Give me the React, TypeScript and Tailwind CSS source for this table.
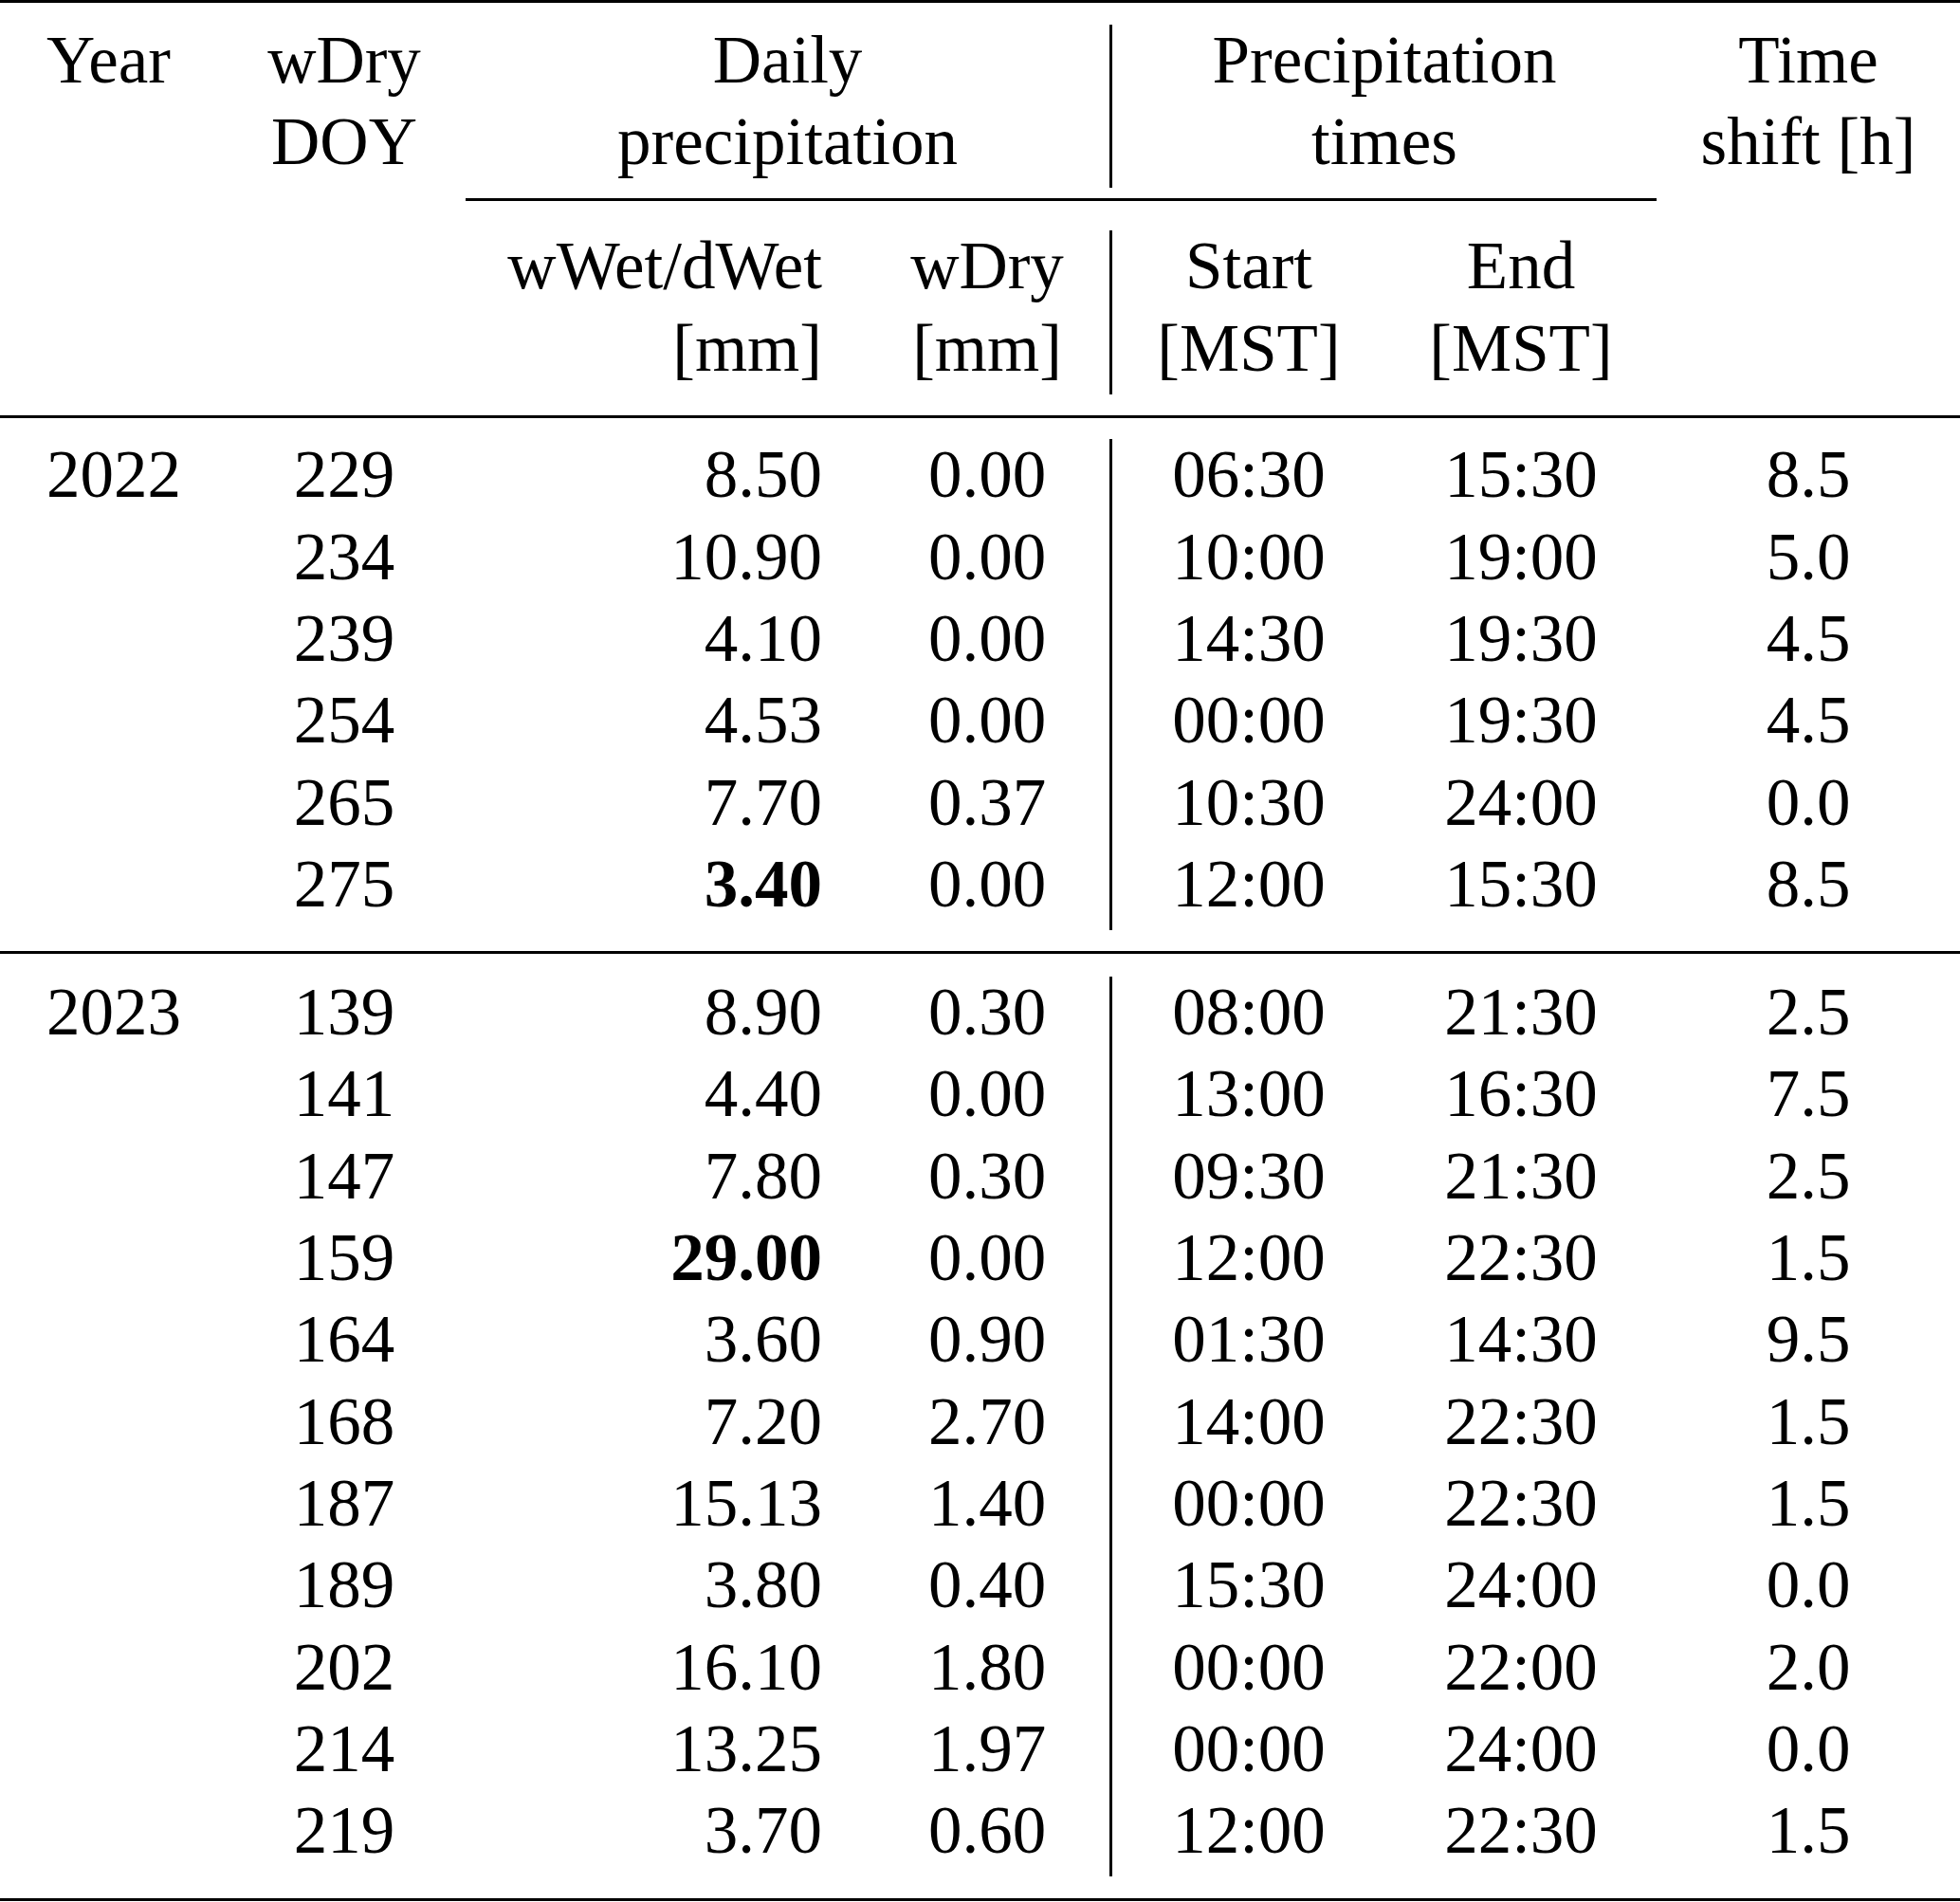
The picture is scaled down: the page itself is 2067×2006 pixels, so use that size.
import React from "react";

type Row = [string, string, string, string, string, string, boolean];

const rows2022: Row[] = [
  ["229", "8.50", "0.00", "06:30", "15:30", "8.5", false],
  ["234", "10.90", "0.00", "10:00", "19:00", "5.0", false],
  ["239", "4.10", "0.00", "14:30", "19:30", "4.5", false],
  ["254", "4.53", "0.00", "00:00", "19:30", "4.5", false],
  ["265", "7.70", "0.37", "10:30", "24:00", "0.0", false],
  ["275", "3.40", "0.00", "12:00", "15:30", "8.5", true],
];

const rows2023: Row[] = [
  ["139", "8.90", "0.30", "08:00", "21:30", "2.5", false],
  ["141", "4.40", "0.00", "13:00", "16:30", "7.5", false],
  ["147", "7.80", "0.30", "09:30", "21:30", "2.5", false],
  ["159", "29.00", "0.00", "12:00", "22:30", "1.5", true],
  ["164", "3.60", "0.90", "01:30", "14:30", "9.5", false],
  ["168", "7.20", "2.70", "14:00", "22:30", "1.5", false],
  ["187", "15.13", "1.40", "00:00", "22:30", "1.5", false],
  ["189", "3.80", "0.40", "15:30", "24:00", "0.0", false],
  ["202", "16.10", "1.80", "00:00", "22:00", "2.0", false],
  ["214", "13.25", "1.97", "00:00", "24:00", "0.0", false],
  ["219", "3.70", "0.60", "12:00", "22:30", "1.5", false],
];

function VLine() {
  return <div className="w-[3px] bg-black self-stretch mt-[6px] mb-[-6px] shrink-0" />;
}

function Body({ year, rows, pt, pb }: { year: string; rows: Row[]; pt: string; pb: string }) {
  return (
    <div className={`flex ${pt} ${pb}`}>
      <div className="grid grid-cols-[235px_256px_421px_258px] w-[1170px] shrink-0">
        {rows.map((r, i) => (
          <React.Fragment key={i}>
            <div className="pl-[49px] text-left">{i === 0 ? year : ""}</div>
            <div className="text-center">{r[0]}</div>
            <div className={`text-right pr-[45px] ${r[6] ? "font-bold" : ""}`}>{r[1]}</div>
            <div className="text-center">{r[2]}</div>
          </React.Fragment>
        ))}
      </div>
      <VLine />
      <div className="grid grid-cols-[288px_286px_320px] w-[894px] shrink-0">
        {rows.map((r, i) => (
          <React.Fragment key={i}>
            <div className="text-center">{r[3]}</div>
            <div className="text-center">{r[4]}</div>
            <div className="text-center">{r[5]}</div>
          </React.Fragment>
        ))}
      </div>
    </div>
  );
}

export default function App() {
  return (
    <div
      className="w-[2067px] h-[2006px] bg-white text-black text-[71px] leading-[86.3px] overflow-hidden"
      style={{ fontFamily: '"Liberation Serif", "Times New Roman", serif' }}
    >
      <div className="h-[3px] bg-black" />

      {/* Header row 1 */}
      <div className="flex pt-[16.5px] pb-[17.4px]">
        <div className="grid grid-cols-[235px_256px_679px] w-[1170px] shrink-0">
          <div className="pl-[49px] text-left">Year</div>
          <div className="text-center">
            <div>wDry</div>
            <div>DOY</div>
          </div>
          <div className="text-center">
            <div>Daily</div>
            <div>precipitation</div>
          </div>
        </div>
        <VLine />
        <div className="grid grid-cols-[574px_320px] w-[894px] shrink-0">
          <div className="text-center">
            <div>Precipitation</div>
            <div>times</div>
          </div>
          <div className="text-center">
            <div>Time</div>
            <div>shift [h]</div>
          </div>
        </div>
      </div>

      {/* cmidrule */}
      <div className="flex">
        <div className="w-[491px] shrink-0" />
        <div className="w-[1256px] h-[3px] bg-black shrink-0" />
      </div>

      {/* Header row 2 */}
      <div className="flex pt-[25px] pb-[28.3px]">
        <div className="grid grid-cols-[235px_256px_421px_258px] w-[1170px] shrink-0">
          <div />
          <div />
          <div className="text-right pr-[45px]">
            <div>wWet/dWet</div>
            <div>[mm]</div>
          </div>
          <div className="text-center">
            <div>wDry</div>
            <div>[mm]</div>
          </div>
        </div>
        <VLine />
        <div className="grid grid-cols-[288px_286px_320px] w-[894px] shrink-0">
          <div className="text-center">
            <div>Start</div>
            <div>[MST]</div>
          </div>
          <div className="text-center">
            <div>End</div>
            <div>[MST]</div>
          </div>
          <div />
        </div>
      </div>

      <div className="h-[3px] bg-black" />

      <Body year="2022" rows={rows2022} pt="pt-[16px]" pb="pb-[28px]" />

      <div className="h-[3px] bg-black" />

      <Body year="2023" rows={rows2023} pt="pt-[18px]" pb="pb-[29px]" />

      <div className="h-[3px] bg-black" />
    </div>
  );
}
